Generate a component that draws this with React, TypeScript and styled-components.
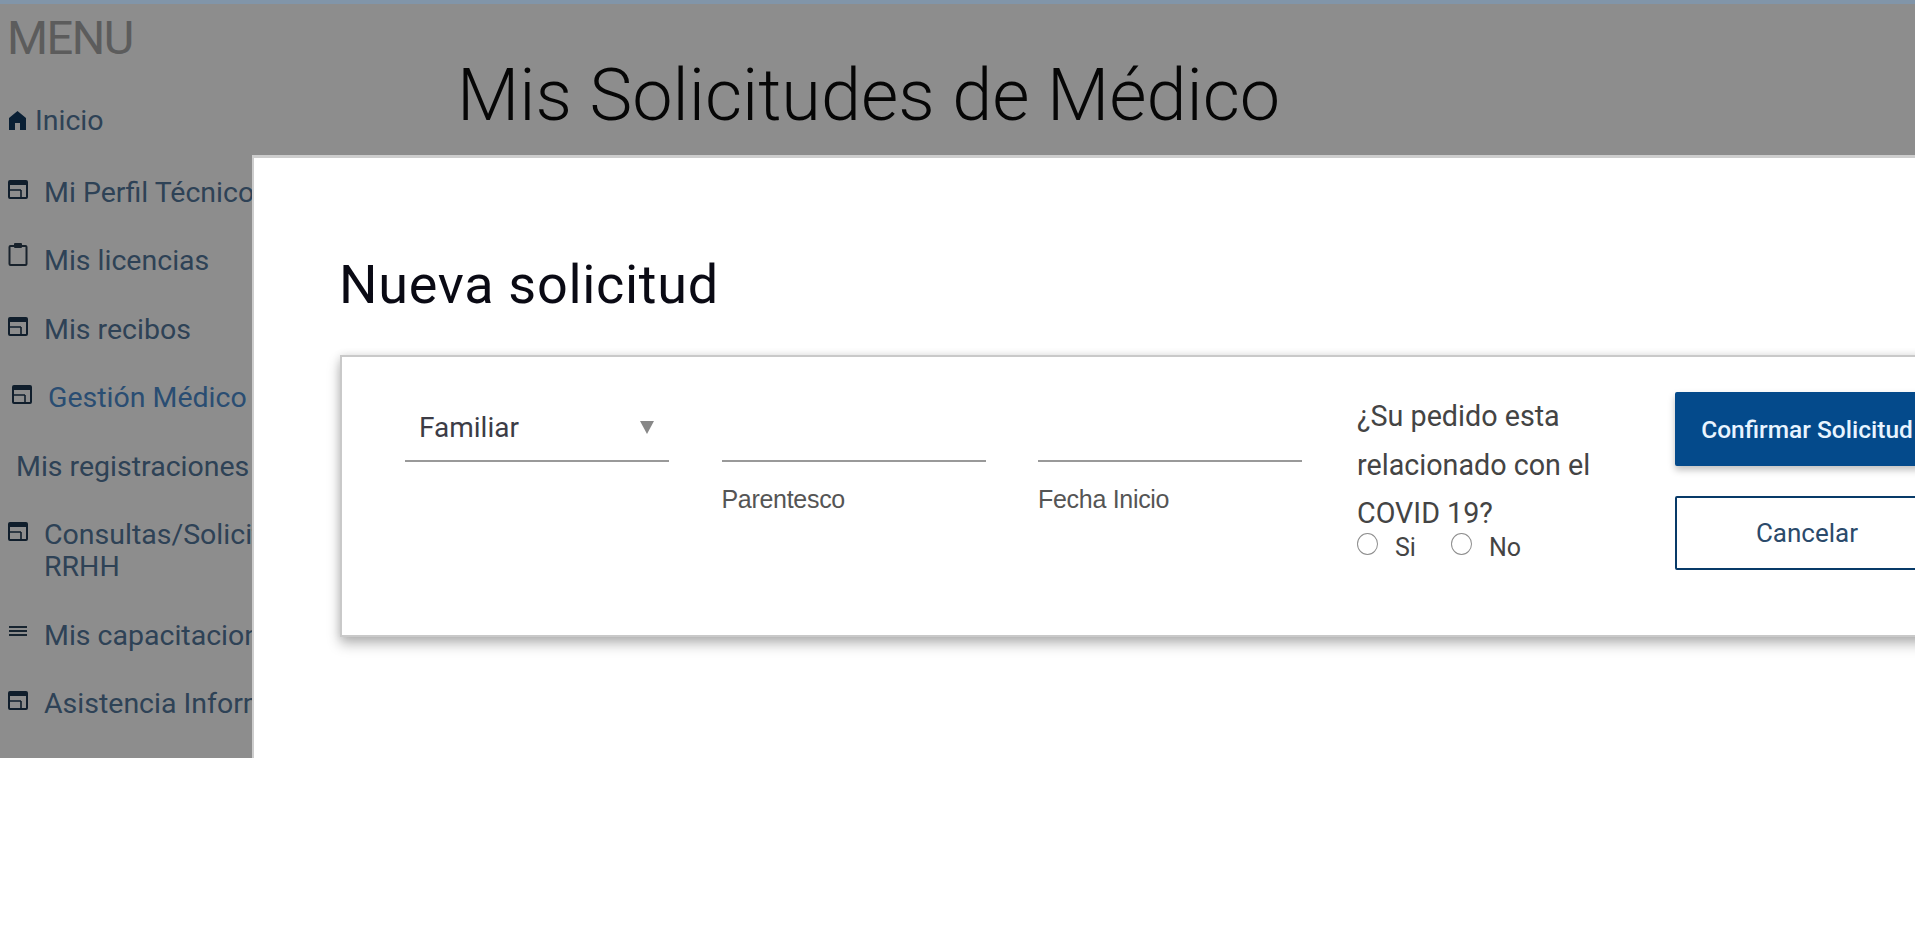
import styled, { createGlobalStyle } from "styled-components";

const GlobalStyle = createGlobalStyle`
  html, body {
    margin: 0;
    padding: 0;
    background: #fff;
    overflow: hidden;
  }
  body {
    font-family: Roboto, "Liberation Sans", sans-serif;
  }
`;

const TopStripe = styled.div`
  height: 4px;
  background: #8195a9;
`;
const Shell = styled.div`
  position: relative;
  display: flex;
  height: 754px;
  overflow: hidden;
`;
const Sidebar = styled.nav`
  width: 457px;
  flex-shrink: 0;
  box-sizing: border-box;
  padding: 8px 0 0 7px;
`;
const MenuTitle = styled.div`
  font-size: 47px;
  font-weight: 400;
  line-height: 52px;
  letter-spacing: -1.5px;
  color: #a6a6a6;
  margin-bottom: 41px;
`;
const MenuList = styled.ul`
  list-style: none;
  margin: 0;
  padding: 0;
  display: flex;
  flex-direction: column;
  gap: 36.5px;
`;
const MenuItem = styled.li<{ $indent?: number; $active?: boolean; $iconTop?: number }>`
  display: flex;
  align-items: flex-start;
  gap: 16px;
  width: 400px;
  padding-left: ${(p) => p.$indent ?? 1}px;
  font-size: 28.5px;
  line-height: 32px;
  color: ${(p) => (p.$active ? "#4c8ccf" : "#53779c")};
  & > svg {
    flex-shrink: 0;
    margin-top: ${(p) => p.$iconTop ?? 2}px;
  }
`;
const HomeItem = styled(MenuItem)`
  gap: 8px;
  margin-bottom: 3px;
`;
const Main = styled.main`
  flex: 1;
  padding-top: 48px;
`;
const PageTitle = styled.h1`
  margin: 0;
  font-size: 72px;
  font-weight: 300;
  line-height: 88px;
  color: #0c0c0c;
`;
const Backdrop = styled.div`
  position: absolute;
  inset: 0;
  background: rgba(0, 0, 0, 0.447);
`;
const Modal = styled.section`
  position: absolute;
  left: 252px;
  top: 151px;
  width: 1800px;
  bottom: 0;
  box-sizing: border-box;
  background: #fff;
  border-top: 3px solid #cdcdcd;
  border-left: 2px solid #cdcdcd;
  padding: 97px 0 0 86px;
`;
const ModalTitle = styled.h2`
  margin: 0 0 40px -1px;
  font-size: 54px;
  font-weight: 400;
  line-height: 60px;
  letter-spacing: 0.7px;
  color: #0a0a14;
`;
const Card = styled.div`
  display: flex;
  align-items: flex-start;
  gap: 52.5px;
  width: 1800px;
  height: 282px;
  box-sizing: border-box;
  padding: 38px 0 0 63px;
  background: #fff;
  border: 2px solid #c9c9c9;
  box-shadow: 0 7px 12px rgba(0, 0, 0, 0.28), 0 0 8px rgba(0, 0, 0, 0.1);
`;
const Field = styled.div`
  width: 264px;
  flex-shrink: 0;
`;
const Control = styled.div`
  height: 67px;
  box-sizing: border-box;
  display: flex;
  align-items: center;
  justify-content: space-between;
  padding: 0 15px 0 14px;
  border-bottom: 2px solid #999;
  font-size: 28px;
  color: #3c3c46;
`;
const Caret = styled.span`
  width: 0;
  height: 0;
  border-left: 7px solid transparent;
  border-right: 7px solid transparent;
  border-top: 13px solid #888;
`;
const FieldLabel = styled.label`
  display: block;
  margin-top: 24px;
  font-family: "Liberation Sans", Arial, sans-serif;
  font-size: 25px;
  line-height: 26px;
  color: #555;
  letter-spacing: -0.3px;
`;
const Question = styled.div`
  width: 248px;
  flex-shrink: 0;
  margin-left: 2.5px;
  margin-top: -3px;
  font-size: 28.7px;
  line-height: 48.6px;
  color: #444;
`;
const RadioRow = styled.div`
  display: flex;
  align-items: center;
  margin-top: -8px;
  font-size: 25px;
  line-height: 36px;
  color: #444;
`;
const Radio = styled.input`
  appearance: none;
  width: 21px;
  height: 22px;
  margin: -7px 17px 0 0;
  border: 1.5px solid #8e8e8e;
  border-radius: 50%;
  background: #fff;
`;
const RadioText = styled.span`
  margin-right: 35px;
`;
const Actions = styled.div`
  display: flex;
  flex-direction: column;
  gap: 30px;
  width: 264px;
  flex-shrink: 0;
  margin-left: 17.5px;
  margin-top: -3px;
`;
const Button = styled.button<{ $primary?: boolean }>`
  height: 74px;
  padding: 0;
  box-sizing: border-box;
  border-radius: 2px;
  white-space: nowrap;
  font-family: Roboto, "Liberation Sans", sans-serif;
  font-size: ${(p) => (p.$primary ? "24.5px" : "26px")};
  border: 2px solid ${(p) => (p.$primary ? "#044a8b" : "#083a68")};
  background: ${(p) => (p.$primary ? "#044a8b" : "#fff")};
  color: ${(p) => (p.$primary ? "#e8f4ff" : "#2b4a6b")};
  font-weight: ${(p) => (p.$primary ? 500 : 400)};
  box-shadow: ${(p) =>
    p.$primary ? "0 4px 7px rgba(0, 0, 0, 0.25)" : "none"};
`;

const WebIcon = () => (
  <svg width="20" height="22" viewBox="0 0 20 22" fill="none">
    <rect x="1" y="2" width="18" height="17" rx="1" stroke="#1d3750" strokeWidth="2" />
    <rect x="1" y="2" width="18" height="4" fill="#1d3750" />
    <path d="M1 11h12M13 11v7" stroke="#1d3750" strokeWidth="1.6" />
  </svg>
);
const ClipboardIcon = () => (
  <svg width="20" height="24" viewBox="0 0 20 24" fill="none">
    <rect x="1.5" y="4" width="17" height="19" rx="1" stroke="#2d3f50" strokeWidth="2" />
    <rect x="6" y="1" width="8" height="5" rx="1" fill="#2d3f50" />
  </svg>
);
const LinesIcon = () => (
  <svg width="20" height="22" viewBox="0 0 20 22" fill="none">
    <path d="M1 5h18M1 9h18M1 13h18" stroke="#2a4158" strokeWidth="2" />
  </svg>
);
const HomeIcon = () => (
  <svg width="19" height="22" viewBox="0 0 19 22" fill="#12395f">
    <path d="M9.5 2 1 9v12h6v-7h5v7h6V9z" />
  </svg>
);

const App = () => {
  return (
    <>
      <GlobalStyle />
      <TopStripe />
      <Shell>
        <Sidebar>
          <MenuTitle>MENU</MenuTitle>
          <MenuList>
            <HomeItem $indent={1} $iconTop={4}>
              <HomeIcon />
              Inicio
            </HomeItem>
            <MenuItem>
              <WebIcon />
              Mi Perfil Técnico
            </MenuItem>
            <MenuItem $iconTop={-3}>
              <ClipboardIcon />
              Mis licencias
            </MenuItem>
            <MenuItem>
              <WebIcon />
              Mis recibos
            </MenuItem>
            <MenuItem $indent={5} $active>
              <WebIcon />
              Gestión Médico
            </MenuItem>
            <MenuItem $indent={9}>Mis registraciones</MenuItem>
            <MenuItem>
              <WebIcon />
              <span>
                Consultas/Solicitudes
                <br />
                RRHH
              </span>
            </MenuItem>
            <MenuItem>
              <LinesIcon />
              Mis capacitaciones
            </MenuItem>
            <MenuItem>
              <WebIcon />
              Asistencia Informes
            </MenuItem>
          </MenuList>
        </Sidebar>
        <Main>
          <PageTitle>Mis Solicitudes de Médico</PageTitle>
        </Main>
        <Backdrop />
        <Modal>
          <ModalTitle>Nueva solicitud</ModalTitle>
          <Card>
            <Field>
              <Control>
                Familiar
                <Caret />
              </Control>
            </Field>
            <Field>
              <Control />
              <FieldLabel>Parentesco</FieldLabel>
            </Field>
            <Field>
              <Control />
              <FieldLabel>Fecha Inicio</FieldLabel>
            </Field>
            <Question>
              ¿Su pedido esta relacionado con el COVID 19?
              <RadioRow>
                <Radio type="radio" name="covid" />
                <RadioText>Si</RadioText>
                <Radio type="radio" name="covid" />
                <RadioText>No</RadioText>
              </RadioRow>
            </Question>
            <Actions>
              <Button $primary>Confirmar Solicitud</Button>
              <Button>Cancelar</Button>
            </Actions>
          </Card>
        </Modal>
      </Shell>
    </>
  );
};

export default App;
